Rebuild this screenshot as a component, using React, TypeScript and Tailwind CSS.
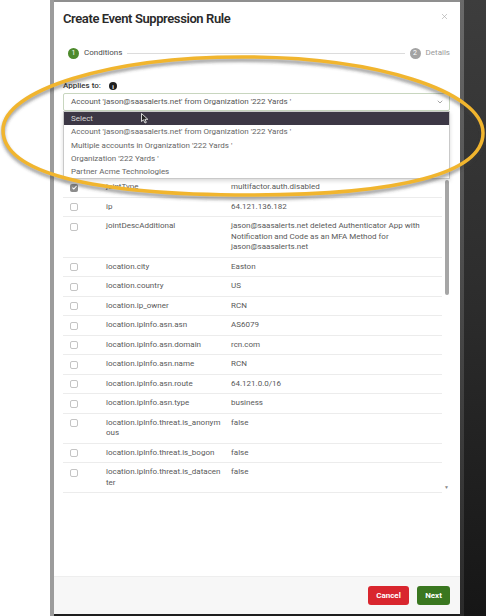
import { X, ChevronDown } from "lucide-react";

const rows: [string, string, boolean?][] = [
  ["jointType", "multifactor.auth.disabled", true],
  ["ip", "64.121.136.182"],
  [
    "jointDescAdditional",
    "jason@saasalerts.net deleted Authenticator App with Notification and Code as an MFA Method for jason@saasalerts.net",
  ],
  ["location.city", "Easton"],
  ["location.country", "US"],
  ["location.ip_owner", "RCN"],
  ["location.ipInfo.asn.asn", "AS6079"],
  ["location.ipInfo.asn.domain", "rcn.com"],
  ["location.ipInfo.asn.name", "RCN"],
  ["location.ipInfo.asn.route", "64.121.0.0/16"],
  ["location.ipInfo.asn.type", "business"],
  ["location.ipInfo.threat.is_anonym\nous", "false"],
  ["location.ipInfo.threat.is_bogon", "false"],
  ["location.ipInfo.threat.is_datacen\nter", "false"],
];

const options = [
  "Account 'jason@saasalerts.net' from Organization '222 Yards '",
  "Multiple accounts in Organization '222 Yards '",
  "Organization '222 Yards '",
  "Partner Acme Technologies",
];

function Checkbox({ checked }: { checked?: boolean }) {
  if (checked) {
    return (
      <div className="flex h-[8px] w-[8px] items-center justify-center rounded-[2px] bg-[#8c8c8c]">
        <svg viewBox="0 0 10 10" className="h-[7px] w-[7px]">
          <path d="M2 5.2l2 2 4-4.4" fill="none" stroke="white" strokeWidth="1.6" />
        </svg>
      </div>
    );
  }
  return <div className="h-[8px] w-[8px] rounded-[2px] border border-[#c4c4c4] bg-white" />;
}

function Stepper() {
  return (
    <div className="mt-[12px] flex h-[12px] items-center text-[8px]">
      <div className="ml-[5px] flex h-[11px] w-[11px] items-center justify-center rounded-full bg-[#4d8a2c] text-[7px] text-white">
        1
      </div>
      <span className="ml-[5px] text-[#4a4a4a]">Conditions</span>
      <div className="mx-[5px] h-px flex-1 bg-[#dcdcdc]" />
      <div className="flex h-[11px] w-[11px] items-center justify-center rounded-full bg-[#a3a3a3] text-[7px] text-white">
        2
      </div>
      <span className="ml-[5px] text-[#9a9a9a]">Details</span>
    </div>
  );
}

function AppliesTo() {
  return (
    <div className="relative mt-[22px]">
      <div className="flex h-[10px] items-center gap-[8px] text-[8px] font-medium text-[#333]">
        <span>Applies to:</span>
        <span className="flex h-[8px] w-[8px] items-center justify-center rounded-full bg-[#1f1f1f] text-[6px] font-bold text-white">
          i
        </span>
      </div>
      <div className="mt-[2px] flex h-[18px] items-center justify-between rounded-[2px] border border-[#c8d6bf] bg-white pl-[7px] pr-[5px] text-[8px] text-[#555]">
        <span>Account 'jason@saasalerts.net' from Organization '222 Yards '</span>
        <ChevronDown className="h-[8px] w-[8px] text-[#777]" strokeWidth={2} />
      </div>
      <div className="absolute left-0 right-0 top-[30px] z-10 border border-[#c9c9c9] bg-white text-[8px] text-[#666] shadow-[0_2px_4px_rgba(0,0,0,0.15)]">
        <div className="h-[13.3px] bg-[#3c3745] pl-[7px] leading-[13.3px] text-[#d6d6d6]">Select</div>
        {options.map((o) => (
          <div key={o} className="h-[13.3px] pl-[7px] leading-[13.3px]">
            {o}
          </div>
        ))}
      </div>
    </div>
  );
}

function FieldTable() {
  return (
    <div className="mt-[67px] flex h-[316px] overflow-hidden">
      <div className="flex-1">
        {rows.map(([k, v, c]) => (
          <div key={k} className="flex border-b border-[#ececec] py-[4px] text-[8px] leading-[10.5px] text-[#595959]">
            <div className="w-[43px] pl-[7px] pt-[1.5px]">
              <Checkbox checked={c} />
            </div>
            <div className="w-[125px] whitespace-pre-line pr-[4px]">{k}</div>
            <div className="w-[200px]">{v}</div>
          </div>
        ))}
      </div>
      <div className="relative ml-[3px] mr-px w-[4px]">
        <div className="mt-[2px] h-[115px] w-[4px] rounded-full bg-[#a6a6a6]" />
        <div className="absolute bottom-[4px] left-[-1px] text-[5px] leading-none text-[#888]">▼</div>
      </div>
    </div>
  );
}

function Modal() {
  return (
    <div className="flex w-[406px] flex-col border-t-2 border-b-2 border-t-[#8f8f8f] border-b-[#1e1e1e] bg-white">
      <div className="flex h-[33px] items-center justify-between pl-[9px] pr-[11px]">
        <h1 className="text-[13px] font-semibold tracking-[-0.4px] text-[#2a2a2a]">Create Event Suppression Rule</h1>
        <X className="mb-[5px] h-[9px] w-[9px] text-[#a5a5a5]" strokeWidth={1.6} />
      </div>
      <div className="flex-1 pl-[9px] pr-[10px]">
        <Stepper />
        <AppliesTo />
        <FieldTable />
      </div>
      <div className="flex h-[38px] items-center justify-end gap-[8px] border-t border-[#eeeeee] bg-[#f7f7f7] pr-[10px] text-[8px] font-bold text-white">
        <button className="h-[19px] w-[41px] rounded-[3px] bg-[#d9262e]">Cancel</button>
        <button className="h-[19px] w-[33px] rounded-[3px] bg-[#3a7720]">Next</button>
      </div>
    </div>
  );
}

export default function App() {
  return (
    <div className="relative flex h-[616px] w-[486px] overflow-hidden bg-white font-['Roboto',sans-serif]">
      <div className="w-[50px] bg-white" />
      <div className="w-[4px] bg-[#9c9c9c]" />
      <Modal />
      <div className="flex flex-1">
        <div className="w-[4px] bg-gradient-to-b from-[#6a6a6a] to-[#2a2a2a]" />
        <div className="flex-1 bg-gradient-to-b from-[#3d3d3d] via-[#2c2c2c] to-[#161616]" />
      </div>

      {/* hand-drawn highlight over the screenshot */}
      <svg className="pointer-events-none absolute inset-0 z-20" width="486" height="616" viewBox="0 0 486 616">
        <defs>
          <filter id="blur" x="-10%" y="-10%" width="120%" height="120%">
            <feGaussianBlur stdDeviation="1.5" />
          </filter>
        </defs>
        <path
          d="M3 130 C3 90 110 57 242 57 C375 57 483 91 483 133 C483 173 401 195 250 195 C89 195 3 172 3 130 Z"
          fill="none"
          stroke="rgba(60,60,60,0.45)"
          strokeWidth="4"
          transform="translate(0 3)"
          filter="url(#blur)"
        />
        <path
          d="M3 130 C3 90 110 57 242 57 C375 57 483 91 483 133 C483 173 401 195 250 195 C89 195 3 172 3 130 Z"
          fill="none"
          stroke="#f1b52e"
          strokeWidth="3.5"
        />
      </svg>

      {/* mouse pointer */}
      <svg className="pointer-events-none absolute left-[141px] top-[113px] z-30" width="8" height="11" viewBox="0 0 8 11">
        <path d="M0.5 0.5 L0.5 8.5 L2.5 6.8 L4 10 L5.3 9.4 L3.9 6.3 L6.8 6.3 Z" fill="#222" stroke="white" strokeWidth="0.8" />
      </svg>
    </div>
  );
}
